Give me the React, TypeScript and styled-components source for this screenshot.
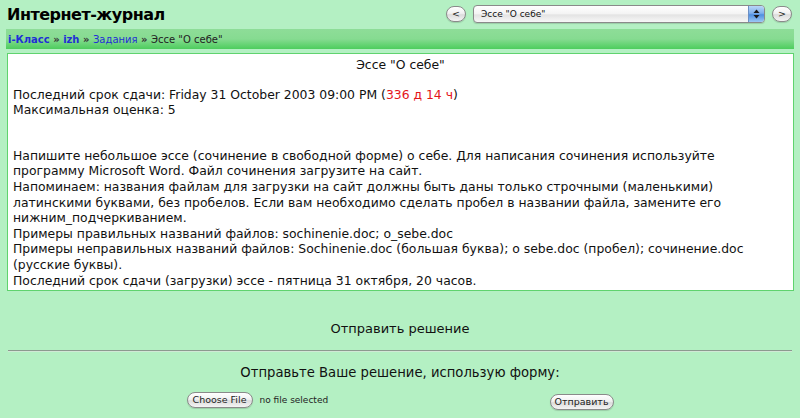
import React, { FC } from "react";
import styled, { createGlobalStyle } from "styled-components";

const GlobalStyle = createGlobalStyle`
  html, body {
    margin: 0;
    padding: 0;
    background: #b4f0c3;
  }
  body {
    font-family: "DejaVu Sans", Verdana, sans-serif;
    color: #111;
  }
`;

const Page = styled.div`
  width: 800px;
  height: 418px;
  padding: 0 6px;
  box-sizing: border-box;
  overflow: hidden;
`;

const Header = styled.div`
  display: flex;
  justify-content: space-between;
  align-items: center;
  height: 29px;
  padding-left: 1px;
`;

const Title = styled.h1`
  margin: 0;
  font-size: 16px;
  font-weight: bold;
  color: #000;
  letter-spacing: -0.5px;
`;

const Jump = styled.div`
  display: flex;
  align-items: center;
  gap: 7px;
  padding-right: 2px;
  margin-top: -2px;
`;

const AquaButton = styled.button`
  height: 16px;
  min-width: 20px;
  padding: 0 5px;
  border: 1px solid #8a8a8a;
  border-radius: 9px;
  background: linear-gradient(#ffffff 0%, #f1f1f1 45%, #dcdcdc 55%, #f4f4f4 100%);
  box-shadow: 0 1px 1px rgba(0, 0, 0, 0.15);
  font-family: "DejaVu Sans", Verdana, sans-serif;
  font-size: 9.5px;
  line-height: 14px;
  color: #222;
  cursor: pointer;
`;

const Popup = styled.div`
  display: flex;
  align-items: center;
  width: 290px;
  height: 16px;
  border: 1px solid #8a8a8a;
  border-radius: 4px;
  overflow: hidden;
  background: linear-gradient(#ffffff 0%, #f3f3f3 50%, #e3e3e3 55%, #f7f7f7 100%);
  box-shadow: 0 1px 1px rgba(0, 0, 0, 0.15);
`;

const PopupText = styled.span`
  flex: 1;
  padding-left: 7px;
  font-size: 9px;
  color: #111;
  white-space: nowrap;
`;

const PopupCap = styled.span`
  display: flex;
  align-items: center;
  justify-content: center;
  width: 15px;
  height: 100%;
  border-left: 1px solid #6b8fc4;
  background: linear-gradient(#b9d6f8 0%, #7fb0ec 45%, #4f8fe0 55%, #9cc8f5 100%);
`;

const Crumbs = styled.div`
  height: 20px;
  display: flex;
  align-items: center;
  padding-left: 2px;
  background: linear-gradient(#8edd98 0%, #86db91 50%, #4dcd5d 100%);
  font-size: 10px;
  color: #222;
  white-space: pre;
`;

const CrumbLink = styled.a<{ $bold?: boolean }>`
  color: #1f2fd6;
  text-decoration: none;
  font-weight: ${(p) => (p.$bold ? "bold" : "normal")};
`;

const Sep = styled.span`
  font-weight: bold;
  color: #333;
`;

const Box = styled.div`
  margin: 4px 0 0 1px;
  background: #fff;
  border: 1px solid #5fd36e;
  padding: 2px 24px 5px 5px;
  font-size: 12.4px;
  line-height: 15.6px;
  height: 238px;
  box-sizing: border-box;
`;

const BoxTitle = styled.div`
  text-align: center;
  margin: 0 -19px 14px 0;
  padding-top: 1px;
`;

const Line = styled.div``;

const Gap = styled.div<{ $h: number }>`
  height: ${(p) => p.$h}px;
`;

const Red = styled.span`
  color: #e4141a;
`;

const Section = styled.div`
  margin-top: 30px;
  text-align: center;
  font-size: 13px;
`;

const Rule = styled.hr`
  margin: 14px 2px 0 2px;
  border: none;
  border-top: 1px solid #8c9a8f;
  border-bottom: 1px solid #d0e8d5;
`;

const FormTitle = styled.div`
  margin-top: 13px;
  text-align: center;
  font-size: 13.2px;
`;

const FormRow = styled.div`
  width: 427px;
  margin: 12px auto 0;
  display: flex;
  justify-content: space-between;
  align-items: flex-start;
`;

const FileField = styled.div`
  display: flex;
  align-items: center;
  gap: 7px;
  font-size: 9px;
  color: #222;
`;

const SubmitButton = styled(AquaButton)`
  margin-top: 2px;
  padding: 0 4px;
`;

const PopupArrows: FC = () => (
  <svg width="7" height="10" viewBox="0 0 7 10">
    <path d="M3.5 0.5 L6.5 4 L0.5 4 Z" fill="#1a1a1a" />
    <path d="M3.5 9.5 L6.5 6 L0.5 6 Z" fill="#1a1a1a" />
  </svg>
);

const App: FC = () => (
  <>
    <GlobalStyle />
    <Page>
      <Header>
        <Title>Интернет-журнал</Title>
        <Jump>
          <AquaButton>&lt;</AquaButton>
          <Popup>
            <PopupText>Эссе "О себе"</PopupText>
            <PopupCap>
              <PopupArrows />
            </PopupCap>
          </Popup>
          <AquaButton>&gt;</AquaButton>
        </Jump>
      </Header>
      <Crumbs>
        <CrumbLink href="#" $bold>
          i-Класс
        </CrumbLink>
        <Sep> » </Sep>
        <CrumbLink href="#" $bold>
          izh
        </CrumbLink>
        <Sep> » </Sep>
        <CrumbLink href="#">Задания</CrumbLink>
        <Sep> » </Sep>
        Эссе "О себе"
      </Crumbs>
      <Box>
        <BoxTitle>Эссе "О себе"</BoxTitle>
        <Line>
          Последний срок сдачи: Friday 31 October 2003 09:00 PM (<Red>336 д 14 ч</Red>)
        </Line>
        <Line>Максимальная оценка: 5</Line>
        <Gap $h={30} />
        <Line>
          Напишите небольшое эссе (сочинение в свободной форме) о себе. Для написания сочинения используйте
          программу Microsoft Word. Файл сочинения загрузите на сайт.
        </Line>
        <Line>
          Напоминаем: названия файлам для загрузки на сайт должны быть даны только строчными (маленькими)
          латинскими буквами, без пробелов. Если вам необходимо сделать пробел в названии файла, замените его
          нижним_подчеркиванием.
        </Line>
        <Line>Примеры правильных названий файлов: sochinenie.doc; o_sebe.doc</Line>
        <Line>
          Примеры неправильных названий файлов: Sochinenie.doc (большая буква); o sebe.doc (пробел); сочинение.doc
          (русские буквы).
        </Line>
        <Line>Последний срок сдачи (загрузки) эссе - пятница 31 октября, 20 часов.</Line>
      </Box>
      <Section>Отправить решение</Section>
      <Rule />
      <FormTitle>Отправьте Ваше решение, использую форму:</FormTitle>
      <FormRow>
        <FileField>
          <AquaButton>Choose File</AquaButton>
          <span>no file selected</span>
        </FileField>
        <SubmitButton>Отправить</SubmitButton>
      </FormRow>
    </Page>
  </>
);

export default App;
